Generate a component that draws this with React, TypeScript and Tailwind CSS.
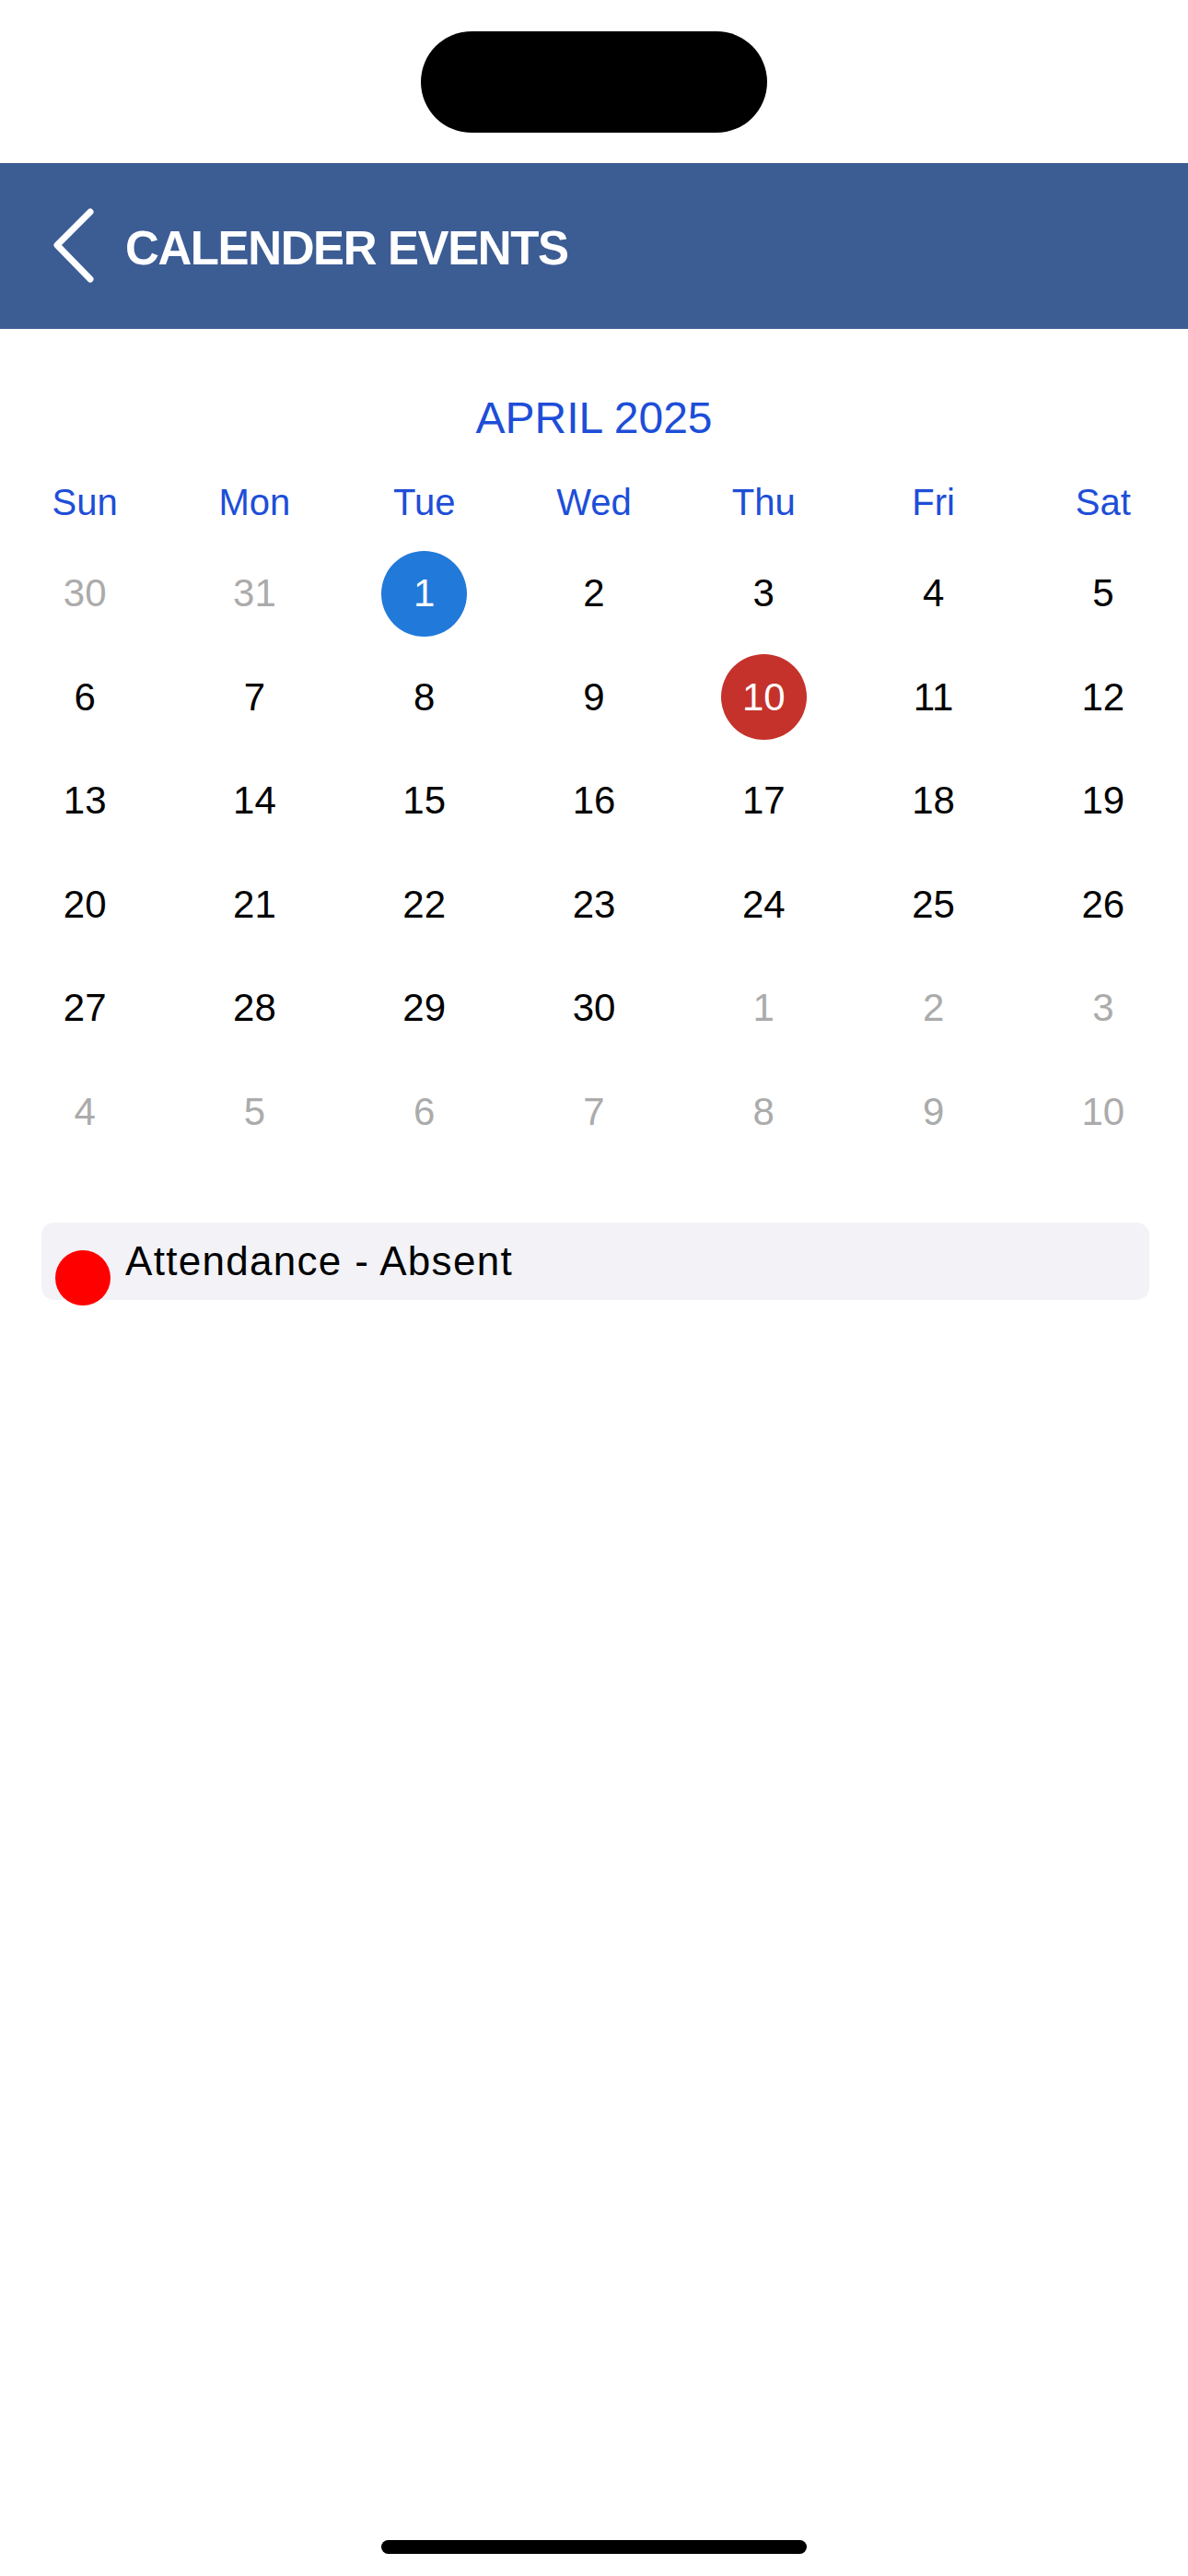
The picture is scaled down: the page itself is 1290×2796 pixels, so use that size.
import React from "react";

type Day = { n: number; muted?: boolean; tone?: "today" | "absent" };

const WEEKDAYS = ["Sun", "Mon", "Tue", "Wed", "Thu", "Fri", "Sat"];

function buildDays(): Day[] {
  const days: Day[] = [{ n: 30, muted: true }, { n: 31, muted: true }];
  for (let i = 1; i <= 30; i++) {
    days.push({ n: i, tone: i === 1 ? "today" : i === 10 ? "absent" : undefined });
  }
  for (let i = 1; i <= 10; i++) days.push({ n: i, muted: true });
  return days;
}

function DayCell({ day }: { day: Day }) {
  if (day.tone) {
    return (
      <div className="flex h-[112.5px] items-center justify-center">
        <div
          className={`flex h-[93px] w-[93px] items-center justify-center rounded-full text-white ${
            day.tone === "today" ? "bg-[#2179da]" : "bg-[#c4322b]"
          }`}
        >
          {day.n}
        </div>
      </div>
    );
  }
  return (
    <div
      className={`flex h-[112.5px] items-center justify-center ${
        day.muted ? "text-[#ababab]" : "text-black"
      }`}
    >
      {day.n}
    </div>
  );
}

export default function App() {
  const days = buildDays();

  return (
    <div className="relative h-[2796px] w-[1290px] overflow-hidden bg-white font-['Liberation_Sans',Arial,sans-serif]">
      {/* status area */}
      <div className="flex h-[177px] justify-center pt-[34px]">
        <div className="h-[110px] w-[376px] rounded-full bg-black" />
      </div>

      {/* header */}
      <div className="flex h-[180px] items-center bg-[#3c5c94]">
        <svg width="50" height="90" viewBox="0 0 50 90" className="ml-[54px] shrink-0">
          <path
            d="M44 8 L8 44 L44 81"
            fill="none"
            stroke="white"
            strokeWidth="7"
            strokeLinecap="round"
            strokeLinejoin="round"
          />
        </svg>
        <h1 className="ml-[32px] mt-[4px] text-[51px] font-bold leading-none tracking-[-1.4px] text-white">
          CALENDER EVENTS
        </h1>
      </div>

      {/* month */}
      <div className="mt-[73px] text-center text-[48px] leading-none text-[#1d4ed8]">APRIL 2025</div>

      <div className="mt-[47px] grid grid-cols-7 text-center text-[40px] leading-none text-[#1d4ed8]">
        {WEEKDAYS.map((d) => (
          <div key={d}>{d}</div>
        ))}
      </div>

      <div className="mt-[23px] grid grid-cols-7 text-[42px] leading-none">
        {days.map((d, i) => (
          <DayCell key={i} day={d} />
        ))}
      </div>

      {/* events */}
      <div className="ml-[45px] mt-[64px] flex h-[84px] w-[1203px] rounded-[14px] bg-[#f2f2f7] pl-[15px]">
        <div className="mt-[30px] h-[60px] w-[60px] shrink-0 rounded-full bg-[#ff0000]" />
        <span className="ml-[16px] self-center text-[44px] leading-none tracking-[1.3px] text-black">
          Attendance - Absent
        </span>
      </div>

      {/* home indicator */}
      <div className="absolute left-[414px] top-[2757px] h-[15px] w-[462px] rounded-full bg-black" />
    </div>
  );
}
